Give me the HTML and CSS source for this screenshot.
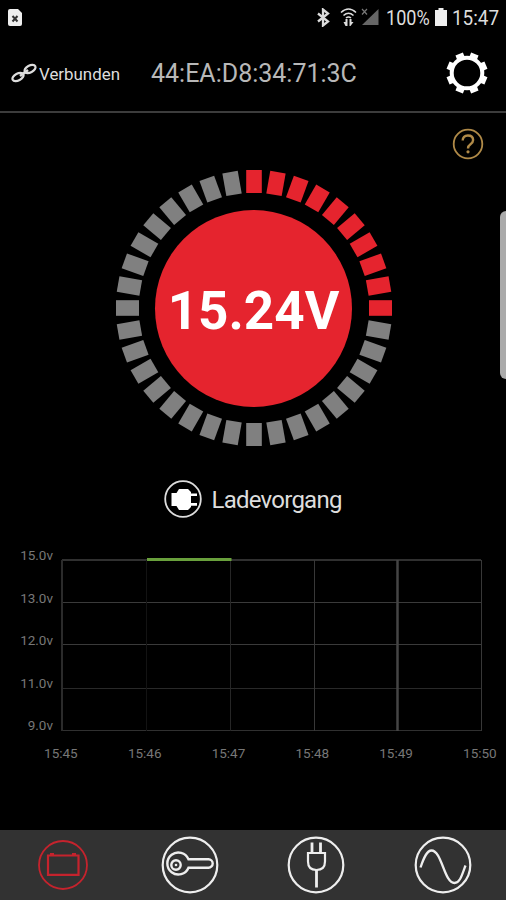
FILE: index.html
```html
<!DOCTYPE html>
<html lang="de">
<head>
<meta charset="utf-8">
<title>Batteriemonitor</title>
<link rel="stylesheet" href="styles.css">
</head>
<body>
<div class="status">
  <svg class="card" width="14" height="17" viewBox="0 0 14 17"><path d="M2 0h8l4 4v11q0 2-2 2H2q-2 0-2-2V2q0-2 2-2z" fill="#eee"/><path d="M4.500 7l5 5.500M9.500 7l-5 5.500" stroke="#333" stroke-width="2"/></svg>
  <svg class="bt" width="13" height="19" viewBox="0 0 13 19"><path d="M1 5.500l10 8-5 4V1.500l5 4-10 8" fill="none" stroke="#ddd" stroke-width="2.300"/></svg>
  <svg class="wifi" width="17" height="19" viewBox="0 0 17 19"><g fill="none" stroke="#ddd" stroke-width="1.600"><path d="M1 4.500q7.500-7 15 0M3.500 7.500q5-4.500 10 0M6 10q2.500-2 5 0"/></g><path d="M3.500 14h2v-3h2v7h-2zM9.500 11h2v3h2l-3 4h-1z" fill="#ddd"/></svg>
  <svg class="signal" width="18" height="18" viewBox="0 0 18 18"><path d="M17.500 1v16H1z" fill="#666"/><path d="M1 1l5 5.500M6 1L1 6.500" stroke="#777" stroke-width="1.200"/></svg>
  <span class="pct"><span>100%</span></span>
  <svg class="batt" width="12" height="18" viewBox="0 0 12 18"><path d="M3.500 0h5v2H12v16H0V2h3.500z" fill="#eee"/></svg>
  <span class="clock"><span>15:47</span></span>
</div>

<header class="header">
  <svg class="link" width="27" height="20" viewBox="0 0 27 20"><g fill="none" stroke="#ddd" stroke-width="2.200"><ellipse cx="19" cy="6" rx="6" ry="3.500" transform="rotate(-28 19 6)"/><ellipse cx="7" cy="14" rx="6" ry="3.500" transform="rotate(-28 7 14)"/></g><path d="M9 13l8-6" stroke="#ddd" stroke-width="2.800"/></svg>
  <span class="state">Verbunden</span>
  <span class="mac">44:EA:D8:34:71:3C</span>
  <svg class="gear" width="42" height="42" viewBox="-21 -21 42 42"><circle r="15.300" fill="none" stroke="#fff" stroke-width="4"/><g id="teeth" fill="#fff"></g></svg>
</header>

<main class="main">
  <svg class="help" width="32" height="32" viewBox="0 0 32 32"><g fill="none" stroke="#b08a48"><circle cx="16" cy="16" r="14.300" stroke-width="1.800"/><path d="M10.700 12.500q0-5 5.200-5t5.200 4.600q0 2.400-2.600 4.200t-2.500 4.200" stroke-width="2.400"/></g><circle cx="16" cy="23.800" r="1.600" fill="#b08a48"/></svg>
  <div class="edge"></div>

  <div class="gauge">
    <svg class="ring" width="280" height="280" viewBox="-140 -140 280 280"><g id="ring"></g></svg>
    <div class="disc"><span>15.24V</span></div>
  </div>

  <div class="mode">
    <svg width="38" height="38" viewBox="0 0 38 38"><circle cx="19" cy="19" r="17.800" fill="none" stroke="#ddd" stroke-width="1.800"/><path d="M7.500 13h5l2.500-4h9l3 3v1.500h6v2.600h-6v7h6v2.600h-6v1.300l-3 3h-9l-2.500-4h-5z" fill="#fff"/></svg>
    <span>Ladevorgang</span>
  </div>

  <section class="chart">
    <div class="ylabels"><span>15.0v</span><span>13.0v</span><span>12.0v</span><span>11.0v</span><span>9.0v</span></div>
    <svg class="plot" width="424" height="176" viewBox="60 557 424 176">
      <g fill="none">
        <path d="M62 560H481" stroke="#303030" stroke-width="2"/>
        <path d="M62 602.500H481M62 644.500H481" stroke="#3a3a3a"/>
        <path d="M62 688.500H481" stroke="#292929"/>
        <path d="M62 730.500H481" stroke="#303030"/>
        <path d="M62 560V731" stroke="#2b2b2b" stroke-width="2"/>
        <path d="M146.500 560V731" stroke="#131313"/>
        <path d="M230.500 560V731" stroke="#262626"/>
        <path d="M314.500 560V731M481.500 560V731" stroke="#383838"/>
        <path d="M397.500 560V731" stroke="#454545" stroke-width="2.500"/>
        <path d="M147 559.500H231.500" stroke="#69a03c" stroke-width="3"/>
      </g>
    </svg>
    <div class="xlabels"><span>15:45</span><span>15:46</span><span>15:47</span><span>15:48</span><span>15:49</span><span>15:50</span></div>
  </section>
</main>

<nav class="tabs">
  <svg width="60" height="60" viewBox="-30 -30 60 60" fill="none" stroke="#c5232d"><circle r="24" stroke-width="1.800"/><path d="M-15-9.500H15.500V9.800H-15z" stroke-width="2.200"/><path d="M-13-11h4M9-11h4" stroke-width="2"/></svg>
  <svg width="60" height="60" viewBox="-30 -30 60 60" fill="none" stroke="#eee"><circle r="27.300" stroke-width="2.200"/><g stroke-width="2.400"><circle cx="-14" r="4.700"/><path d="M-1.500-5.700H18.500a4.200 4.200 0 0 1 0 8.400H-1.500A11 11 0 1 1-1.500-5.700z"/></g><circle cx="-14" r="1.300" fill="#eee" stroke="none"/></svg>
  <svg width="60" height="60" viewBox="-30 -30 60 60" fill="none" stroke="#eee"><circle r="27.300" stroke-width="2.200"/><path d="M-8-12H9V-3.500Q9 5 .5 5T-8-3.500z" stroke-width="2.200"/><path d="M-4-22.500v10M4.500-22.500v10M.5 5v17.500" stroke-width="2.800"/></svg>
  <svg width="60" height="60" viewBox="-30 -30 60 60" fill="none" stroke="#eee"><circle r="27.300" stroke-width="2.200"/><path d="M-22.500 2.500C-19-8-16-14.500-11.500-14.500C-1-14.500 1 18 11.500 18C17 18 19 10 22.500 .5" stroke-width="2.300"/></svg>
</nav>
<script src="gauge.js"></script>
</body>
</html>
```

FILE: styles.css
```css
* { box-sizing: border-box; }
body {
  margin: 0;
  width: 506px;
  height: 900px;
  overflow: hidden;
  display: flex;
  flex-direction: column;
  background: #000;
  color: #ddd;
  font-family: Roboto, "Liberation Sans", sans-serif;
}
svg { display: block; flex: none; }

.status { display: flex; height: 36px; padding: 8px 0 0 8px; }
.card { margin-top: 1px; }
.bt { margin-left: 295px; }
.wifi { margin-left: 10px; }
.signal { margin-left: 4px; }
.pct, .clock { font-size: 21px; line-height: 20px; white-space: nowrap; }
.pct span, .clock span { display: block; transform-origin: 0 0; }
.pct { width: 44px; margin-left: 7px; }
.pct span { transform: scaleX(.86); }
.batt { margin-left: 5px; }
.clock { width: 50px; margin-left: 5px; }
.clock span { transform: scaleX(.9); }

.header {
  display: flex;
  align-items: center;
  height: 77px;
  padding: 0 0 2px 11px;
  border-bottom: 2px solid #3c3c3c;
}
.state { width: 112px; margin: 2px 0 0 1px; font-size: 16.900px; }
.mac { width: 295px; margin-top: 2px; font-size: 25px; color: #b8b8b8; white-space: nowrap; }

.main { flex: 1; position: relative; }
.help { position: absolute; left: 452px; top: 15px; }
.edge {
  position: absolute;
  right: -6px;
  top: 98px;
  width: 12px;
  height: 168px;
  border-radius: 6px;
  background: #aaa;
}

.gauge { display: grid; place-items: center; width: 280px; height: 280px; margin: 55px 0 0 113.500px; }
.gauge > * { grid-area: 1 / 1; }
.disc {
  display: grid;
  place-items: center;
  width: 197px;
  height: 197px;
  border-radius: 50%;
  background: #e5242e;
  color: #fff;
  font-size: 53px;
  font-weight: 700;
  padding-top: 5px;
}
.lit { fill: #e5242e; }
.dim { fill: #808080; }

.mode { display: flex; align-items: center; height: 38px; margin: 32px 0 0 163.500px; font-size: 24px; }
.mode span { margin: 2px 0 0 10px; letter-spacing: -.75px; }

.chart {
  display: grid;
  grid-template-columns: 60px 446px;
  margin-top: 39px;
  font-size: 13.500px;
  color: #777;
}
.ylabels { display: flex; flex-direction: column; align-items: flex-end; padding-right: 7px; margin-top: -12px; }
.ylabels span { height: 42.500px; line-height: 20px; }
.plot { align-self: start; }
.xlabels { grid-column: 1 / 3; display: flex; margin: -13px 0 0 19px; }
.xlabels span { width: 83.800px; text-align: center; flex: none; line-height: 16px; }

.tabs { display: grid; grid-template-columns: repeat(4, 1fr); justify-items: center; align-items: center; height: 70px; background: #323232; }
```

FILE: gauge.js
```js
const NS = "http://www.w3.org/2000/svg";

function spokes(id, count, offset, box, classFor) {
  const group = document.getElementById(id);
  for (let i = 0; i < count; i++) {
    const r = document.createElementNS(NS, "rect");
    for (const key in box) r.setAttribute(key, box[key]);
    r.setAttribute("transform", `rotate(${offset + i * 360 / count})`);
    r.setAttribute("class", classFor(i));
    group.appendChild(r);
  }
}

spokes("ring", 36, 0, { x: -7.8, y: -138, width: 15.6, height: 23 }, i => i < 10 ? "lit" : "dim");
spokes("teeth", 8, 22.5, { x: -4, y: -20.5, width: 8, height: 6 }, () => "tooth");
```
